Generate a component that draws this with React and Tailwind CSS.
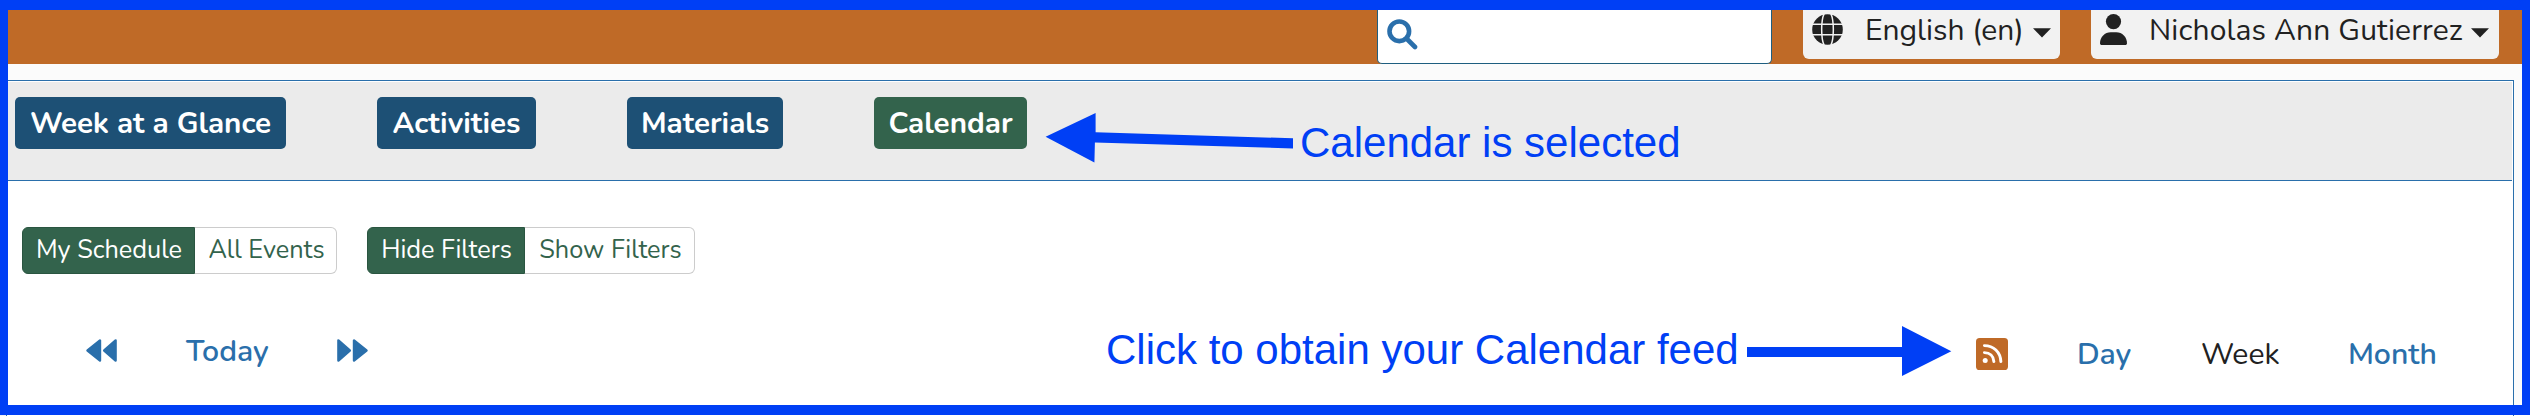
import React from 'react';

function Search() {
  return (
    <svg width="31" height="31" viewBox="0 0 31 31" className="block shrink-0" fill="none" stroke="#2a6fab">
      <circle cx="12.3" cy="12.3" r="9.8" strokeWidth="4.6" />
      <path d="M20 20L28 28" strokeWidth="4.6" strokeLinecap="round" />
    </svg>
  );
}

function Globe() {
  return (
    <svg width="31" height="31" viewBox="0 0 31 31" className="block shrink-0">
      <circle cx="15.5" cy="15.5" r="15.3" fill="#212121" />
      <g fill="none" stroke="#f2f2f2" strokeWidth="1.5">
        <path d="M0 10.2H31M0 20.8H31" />
        <path d="M12.3 -0.6C8.8 6 8.8 25 12.3 31.6M18.7 -0.6C22.2 6 22.2 25 18.7 31.6" />
      </g>
    </svg>
  );
}

function Person() {
  return (
    <svg width="27" height="31" viewBox="0 0 27 31" className="block shrink-0" fill="#212121">
      <circle cx="13.5" cy="7.6" r="7.6" />
      <path d="M10.7 18.2H16.3C22.2 18.2 27 23 27 29.2C27 30.2 26.2 31 25.2 31H1.8C0.8 31 0 30.2 0 29.2C0 23 4.8 18.2 10.7 18.2Z" />
    </svg>
  );
}

function Caret() {
  return (
    <svg width="18" height="10" viewBox="0 0 18 10" className="mt-[3px] -ml-px block shrink-0">
      <path d="M0 0.3H18L9 9.6Z" fill="#212121" />
    </svg>
  );
}

function Rewind({ flip }) {
  return (
    <svg
      width="31"
      height="23"
      viewBox="0 0 31 23"
      className={flip ? 'mb-px block shrink-0 -scale-x-100' : 'mb-px block shrink-0'}
      fill="#2a6fab"
      stroke="#2a6fab"
      strokeWidth="2.4"
      strokeLinejoin="round"
    >
      <path d="M1.5 11.5L14 1.4V21.6Z" />
      <path d="M18.2 11.5L29.6 1.4V21.6Z" />
    </svg>
  );
}

function Rss() {
  return (
    <svg width="32" height="32" viewBox="0 0 32 32" className="block shrink-0">
      <rect width="32" height="32" rx="3.6" fill="#bf6a27" />
      <circle cx="9.2" cy="22.6" r="2.5" fill="#fff" />
      <g fill="none" stroke="#fff" strokeWidth="2.9" strokeLinecap="round">
        <path d="M8.4 14.6C13.8 14.6 17.6 18.2 17.9 23.6" />
        <path d="M8.4 7.6C17.6 7.6 24.4 14.2 24.9 23.6" />
      </g>
    </svg>
  );
}

const tab =
  'flex h-[52px] items-center justify-center rounded-[5px] text-[29.6px] leading-[41px] font-bold whitespace-nowrap text-white';

function Toggle({ on, off, onWidth, offWidth }) {
  return (
    <div className="flex h-[47px] text-[25.3px] leading-[34px] whitespace-nowrap">
      <button className={`flex items-center justify-center rounded-l-[6px] border border-[#2a5540] bg-[#33634c] pb-0.5 pl-px text-white ${onWidth}`}>
        {on}
      </button>
      <button className={`flex items-center justify-center rounded-r-[6px] border border-l-0 border-[#cccccc] bg-white pb-0.5 pl-0.5 text-[#33634c] ${offWidth}`}>
        {off}
      </button>
    </div>
  );
}

export default function App() {
  return (
    <div className="relative h-[416px] w-[2530px] overflow-hidden bg-white font-['Nunito','Lato',sans-serif] text-[#212121]">
      <div className="flex h-[415px] flex-col overflow-hidden border-x-8 border-y-10 border-[#003ff5] bg-[#fbfbfb]">
        <header className="flex h-[54px] shrink-0 justify-end bg-[#bf6a27] pr-[23px]">
          <div className="flex h-[54px] w-[395px] rounded-b-[5px] border border-t-0 border-[#1e5e80] bg-white pt-[9px] pl-[9px]">
            <Search />
          </div>
          <div className="ml-[31px] flex h-[49px] w-[257px] items-center rounded-b-[6px] bg-[#f2f2f2] pb-[7px] pl-[9px] text-[30px] leading-[42px]">
            <div className="-mt-[3px]">
              <Globe />
            </div>
            <span className="ml-[22px] w-[169px] whitespace-nowrap">English (en)</span>
            <Caret />
          </div>
          <div className="ml-[31px] flex h-[49px] w-[408px] items-center rounded-b-[6px] bg-[#f2f2f2] pb-[7px] pl-[9px] text-[30px] leading-[42px]">
            <div className="-mt-[3px]">
              <Person />
            </div>
            <span className="ml-[22px] w-[323px] tracking-[0.14px] whitespace-nowrap">Nicholas Ann Gutierrez</span>
            <Caret />
          </div>
        </header>

        <main className="mt-4 flex w-[2506px] grow flex-col border-t border-r border-[#2a6fab] bg-white pt-px pr-px">
          <nav className="flex h-[99px] shrink-0 border-b border-[#2a6fab] bg-[#ebebeb] pt-[15px] pl-[7px]">
            <a className={`${tab} w-[271px] bg-[#1d5075]`}>Week at a Glance</a>
            <a className={`${tab} ml-[91px] w-[159px] bg-[#1d5075]`}>Activities</a>
            <a className={`${tab} ml-[91px] w-[156px] bg-[#1d5075]`}>Materials</a>
            <a className={`${tab} ml-[91px] w-[153px] bg-[#33634c]`}>Calendar</a>
          </nav>

          <div className="mt-[46px] flex gap-[30px] pl-[14px]">
            <Toggle on="My Schedule" off="All Events" onWidth="w-[173px]" offWidth="w-[142px]" />
            <Toggle on="Hide Filters" off="Show Filters" onWidth="w-[158px]" offWidth="w-[170px]" />
          </div>

          <div className="mt-[56px] flex h-[42px] justify-between pr-[75px] pl-[78px] text-[30.2px] leading-[42px] font-semibold whitespace-nowrap text-[#2a6fab]">
            <div className="flex items-center">
              <Rewind />
              <span className="ml-[69px] w-[151px]">Today</span>
              <Rewind flip />
            </div>
            <div className="relative top-[3px] flex items-center">
              <Rss />
              <span className="ml-[69px] w-[124px]">Day</span>
              <span className="w-[147px] font-normal text-[#212121]">Week</span>
              <span>Month</span>
            </div>
          </div>
        </main>
      </div>

      <div className="flex h-px">
        <div className="w-[6px] bg-[#f0f0f5]" />
        <div className="w-px bg-[#2a6fab]" />
        <div className="ml-[2506px] w-px bg-[#2a6fab]" />
      </div>

      <svg width="250" height="52" viewBox="0 0 250 52" className="absolute top-[112px] left-[1045px]" fill="#003ff5">
        <path d="M0.6 24.7L50.6 1V20.3L248 26.3V36.5L49.9 30.6L49.4 50.6Z" />
      </svg>
      <div className="absolute top-[119px] left-[1300px] font-['Liberation_Sans',Arial,sans-serif] text-[42px] leading-[48px] whitespace-nowrap text-[#003ff5]">
        Calendar is selected
      </div>
      <div className="absolute top-[326px] left-[1106px] font-['Liberation_Sans',Arial,sans-serif] text-[42px] leading-[48px] whitespace-nowrap text-[#003ff5]">
        Click to obtain your Calendar feed
      </div>
      <svg width="206" height="52" viewBox="0 0 206 52" className="absolute top-[325px] left-[1746px]" fill="#003ff5">
        <path d="M1 22H156V1L205.3 26.3L156 51V32H1Z" />
      </svg>
    </div>
  );
}
